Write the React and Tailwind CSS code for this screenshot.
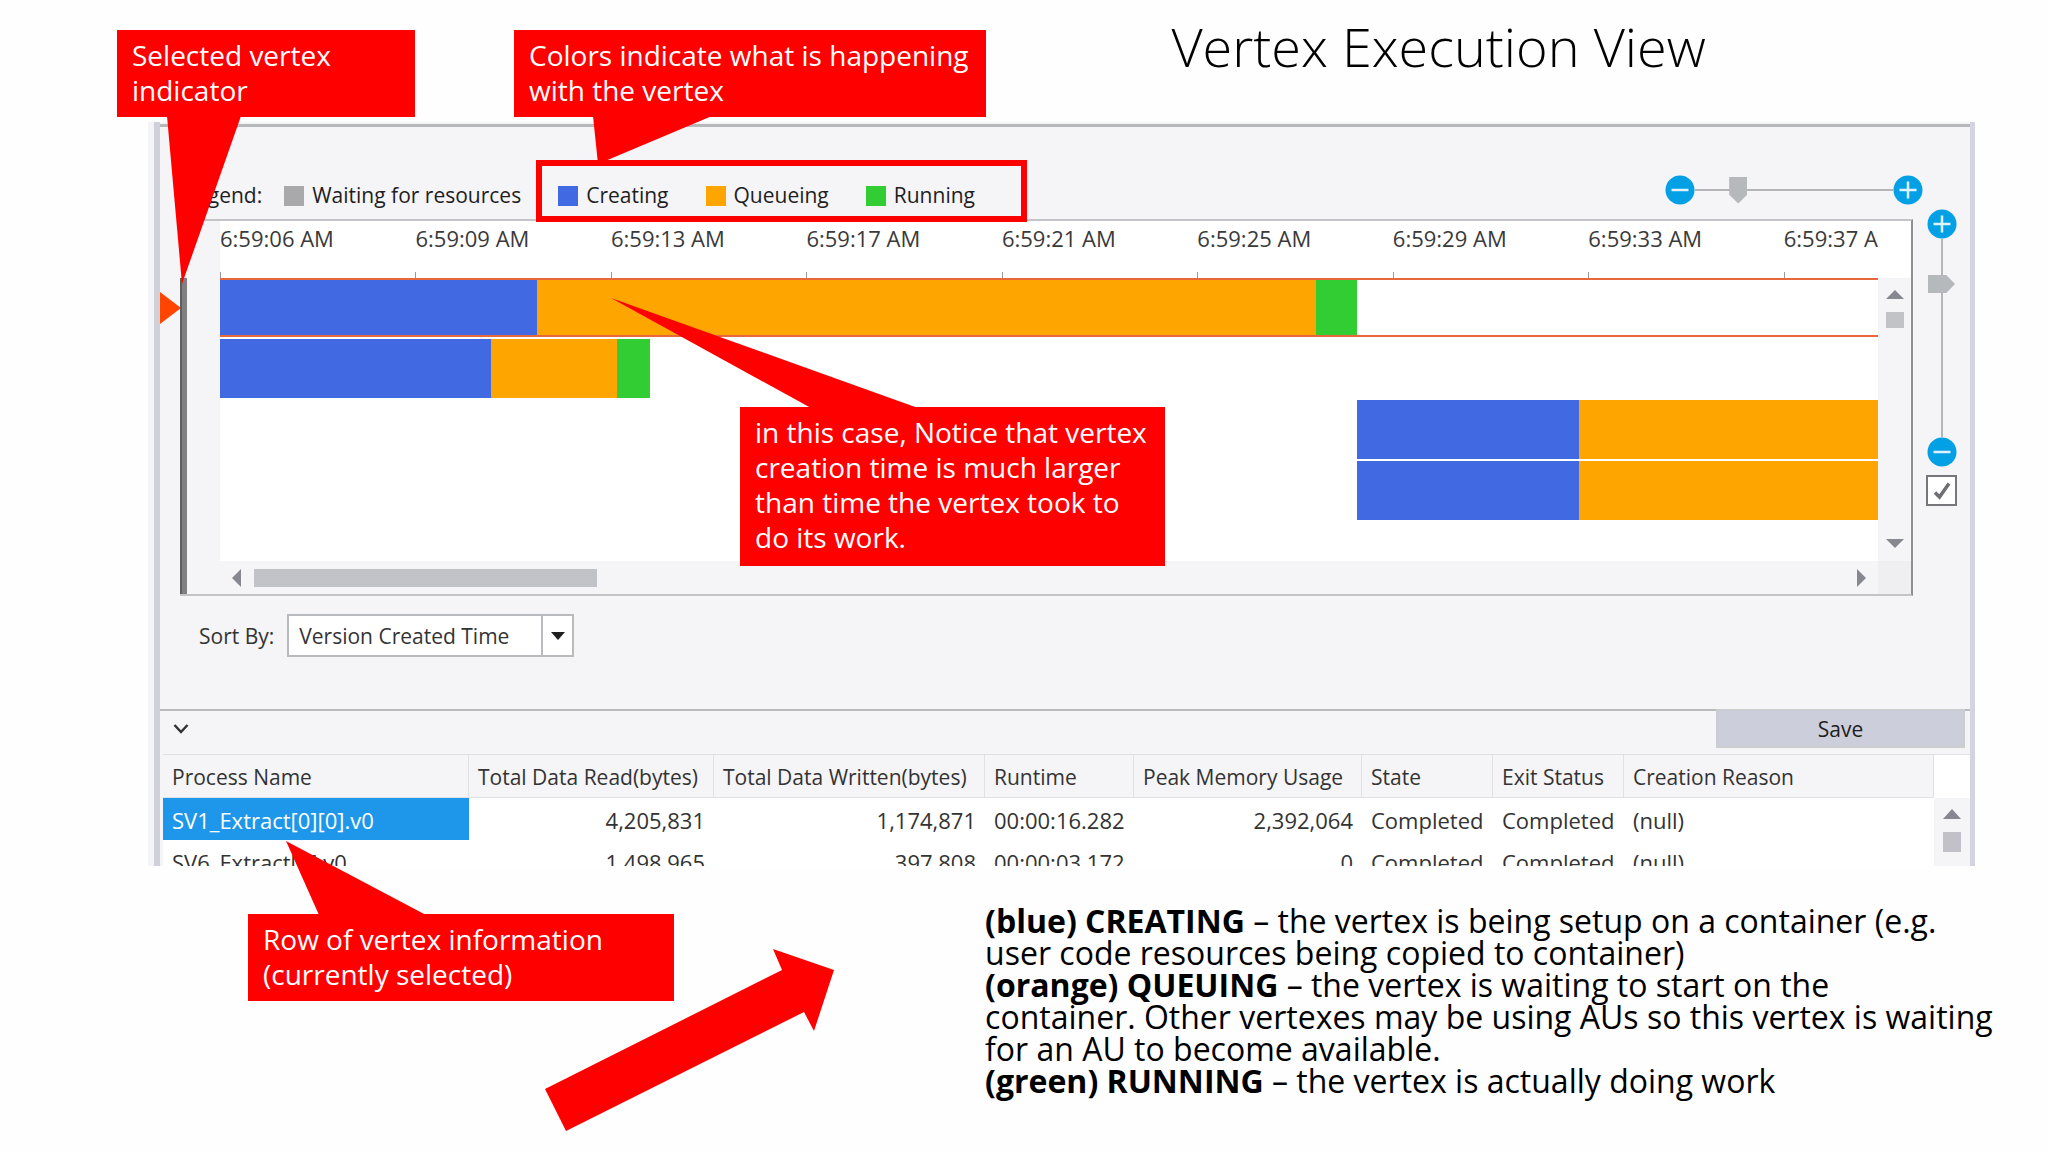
import React, { useState } from 'react';

const LEGEND = [
  { label: 'Waiting for resources', color: 'bg-[#a9a9ab]' },
  { label: 'Creating', color: 'bg-[#4169e1]' },
  { label: 'Queueing', color: 'bg-[#ffa500]' },
  { label: 'Running', color: 'bg-[#32cd32]' },
];

const TIMES = [
  '6:59:06 AM', '6:59:09 AM', '6:59:13 AM', '6:59:17 AM', '6:59:21 AM',
  '6:59:25 AM', '6:59:29 AM', '6:59:33 AM', '6:59:37 AM',
];

// start and segment lengths are percentages of the visible time range
const VERTICES = [
  { start: 0, creating: 19.12, queueing: 46.98, running: 2.47, selected: true },
  { start: 0, creating: 16.34, queueing: 7.6, running: 1.99 },
  { start: 68.58, creating: 13.39, queueing: 18.03, running: 0 },
  { start: 68.58, creating: 13.39, queueing: 18.03, running: 0 },
];

const PROCESSES = [
  { name: 'SV1_Extract[0][0].v0', read: '4,205,831', written: '1,174,871', runtime: '00:00:16.282', memory: '2,392,064', state: 'Completed', exit: 'Completed', reason: '(null)' },
  { name: 'SV6_Extract[0].v0', read: '1,498,965', written: '397,808', runtime: '00:00:03.172', memory: '0', state: 'Completed', exit: 'Completed', reason: '(null)' },
];

const HEADERS = [
  'Process Name', 'Total Data Read(bytes)', 'Total Data Written(bytes)', 'Runtime',
  'Peak Memory Usage', 'State', 'Exit Status', 'Creation Reason',
];

function Callout({ className, tail, children }) {
  return (
    <div className={`absolute z-20 bg-[#ff0000] px-[15px] pt-2 text-white text-[28px] leading-[35px] whitespace-nowrap ${className}`}>
      <svg className="absolute left-0 top-0 overflow-visible pointer-events-none" width="1" height="1">
        <polygon points={tail} fill="#ff0000" />
      </svg>
      <p className="relative">{children}</p>
    </div>
  );
}

function ZoomButton({ plus, label }) {
  return (
    <button type="button" aria-label={label} className="block shrink-0">
      <svg width="30" height="30" viewBox="0 0 30 30">
        <circle cx="15" cy="15" r="14.5" fill="#03a0e6" />
        <path d={plus ? 'M6.5 15h17M15 6.5v17' : 'M6.5 15h17'} stroke="#dff3fd" strokeWidth="2.5" />
      </svg>
    </button>
  );
}

function Arrow({ points }) {
  return (
    <svg width="18" height="18" viewBox="0 0 18 18" className="shrink-0">
      <polygon points={points} fill="#87878f" />
    </svg>
  );
}

function Legend() {
  return (
    <div className="flex items-center h-[42px] text-[21px] text-[#1e1e1e] whitespace-nowrap">
      <span className="mr-[22px]">Legend:</span>
      <ul className="flex gap-[37px]">
        {LEGEND.map((item) => (
          <li key={item.label} className="flex items-center gap-2">
            <span className={`size-5 ${item.color}`} />
            {item.label}
          </li>
        ))}
      </ul>
    </div>
  );
}

function Timeline() {
  return (
    <div className="flex-1 min-w-0 flex border-y-2 border-[#c4c4c8] border-r-2 border-r-[#8e8e93]">
      <div className="w-10 shrink-0 pt-[57px]">
        <div className="w-[7px] h-full bg-[#808080] border-l-2 border-[#5f5f61]" />
      </div>
      <div className="flex-1 min-w-0 flex flex-col">
        <div className="bg-white h-[57px] pr-[33px]">
          <div className="flex h-full overflow-hidden">
            {TIMES.map((time) => (
              <div key={time} className="w-[11.79%] shrink-0 flex flex-col justify-between whitespace-nowrap text-[22px] leading-[34px] text-[#3a3a3a]">
                {time}
                <span className="block w-px h-1.5 bg-[#9a9a9e]" />
              </div>
            ))}
          </div>
        </div>
        <div className="flex">
          <div className="flex-1 min-w-0 bg-white h-[283px] overflow-hidden flex flex-col gap-0.5">
            {VERTICES.map((v, i) => (
              <div key={i} className={`flex h-[59px] shrink-0 ${v.selected ? 'border-y-2 border-[#e8683c]' : ''}`}>
                <div style={{ width: `${v.start}%` }} />
                <div className="bg-[#4169e1]" style={{ width: `${v.creating}%` }} />
                <div className="bg-[#ffa500]" style={{ width: `${v.queueing}%` }} />
                <div className="bg-[#32cd32]" style={{ width: `${v.running}%` }} />
              </div>
            ))}
          </div>
          <div className="w-[33px] flex flex-col items-center justify-between pt-2 pb-2 bg-[#f5f4f7]">
            <div className="flex flex-col items-center gap-2">
              <Arrow points="0,13 18,13 9,4" />
              <span className="w-[18px] h-4 bg-[#c2c3c7]" />
            </div>
            <Arrow points="0,4 18,4 9,13" />
          </div>
        </div>
        <div className="flex h-[33px]">
          <div className="flex-1 flex items-center bg-[#f5f4f7] pl-2 pr-2">
            <Arrow points="13,0 13,18 4,9" />
            <div className="flex-1 px-2">
              <div className="w-[21.6%] h-[18px] bg-[#c2c3c9]" />
            </div>
            <Arrow points="5,0 5,18 14,9" />
          </div>
          <div className="w-[33px] bg-[#efeef1]" />
        </div>
      </div>
    </div>
  );
}

function ProcessTable() {
  return (
    <div className="flex h-[112px] overflow-hidden border-t border-[#dfe1e4] ml-[3px] bg-white">
      <table className="flex-1 table-fixed border-separate border-spacing-0 w-full self-start text-[#333333]">
        <colgroup>
          <col className="w-[306px]" />
          <col className="w-[245px]" />
          <col className="w-[271px]" />
          <col className="w-[149px]" />
          <col className="w-[228px]" />
          <col className="w-[131px]" />
          <col className="w-[131px]" />
          <col />
        </colgroup>
        <thead>
          <tr className="h-[43px] bg-[#f5f4f7] text-[21px]">
            {HEADERS.map((h) => (
              <th key={h} scope="col" className="border-r border-b border-[#dfe1e4] font-normal text-left px-[9px] pt-1 whitespace-nowrap">{h}</th>
            ))}
          </tr>
        </thead>
        <tbody>
          {PROCESSES.map((p, i) => (
            <tr key={p.name} className="h-[42px] whitespace-nowrap text-[22px]">
              <td className={i === 0 ? 'px-[9px] pt-0.5 bg-[#1e97ea] text-white' : 'px-[9px] pt-0.5'}>{p.name}</td>
              <td className="px-[9px] pt-0.5 text-right">{p.read}</td>
              <td className="px-[9px] pt-0.5 text-right">{p.written}</td>
              <td className="px-[9px] pt-0.5">{p.runtime}</td>
              <td className="px-[9px] pt-0.5 text-right">{p.memory}</td>
              <td className="px-[9px] pt-0.5">{p.state}</td>
              <td className="px-[9px] pt-0.5">{p.exit}</td>
              <td className="px-[9px] pt-0.5">{p.reason}</td>
            </tr>
          ))}
        </tbody>
      </table>
      <div className="w-9 shrink-0 pt-[43px]">
        <div className="h-full bg-[#f5f4f7] flex flex-col items-center gap-2 pt-2">
          <Arrow points="0,13 18,13 9,3" />
          <span className="w-[18px] h-5 bg-[#c2c1c9]" />
        </div>
      </div>
    </div>
  );
}

function App() {
  const [zoomX, setZoomX] = useState(19);
  const [zoomY, setZoomY] = useState(80);
  const [fit, setFit] = useState(true);

  return (
    <div className="relative min-h-screen w-full overflow-hidden bg-[#fefefe] font-['Open_Sans','Noto_Sans',sans-serif]">
      <header className="h-[122px] pl-[57.2%]">
        <h1 className="text-[54px] leading-[92px] font-light text-black whitespace-nowrap">Vertex Execution View</h1>
      </header>

      {/* Tool window */}
      <section className="ml-[148px] mr-[73px] pl-1.5 bg-[#f4f3f8]">
        <div className="border-l-6 border-[#d0d1d8] border-r-5 border-r-[#d3d3e2] bg-[#f5f4f7] pt-0.5">
          <div className="border-t-3 border-[#b7b8ba] h-[95px] pt-12 pl-[25px] pr-[47px] flex items-start justify-between">
            <Legend />
            <div className="flex items-center">
              <ZoomButton label="Zoom out time" />
              <input
                type="range"
                aria-label="Time zoom"
                value={zoomX}
                onChange={(e) => setZoomX(Number(e.target.value))}
                className="appearance-none w-[198px] h-7 bg-[linear-gradient(#b4b5b9,#b4b5b9)] bg-[length:100%_2px] bg-center bg-no-repeat [&::-webkit-slider-thumb]:appearance-none [&::-webkit-slider-thumb]:w-[18px] [&::-webkit-slider-thumb]:h-[27px] [&::-webkit-slider-thumb]:bg-[#b6b9bc] [&::-webkit-slider-thumb]:[clip-path:polygon(0_0,100%_0,100%_68%,50%_100%,0_68%)]"
              />
              <ZoomButton plus label="Zoom in time" />
            </div>
          </div>

          <div className="flex">
            <div className="w-5 shrink-0 pt-[73px]">
              <svg width="21" height="32" className="overflow-visible">
                <polygon points="0,0 21,16 0,32" fill="#ff4500" />
              </svg>
            </div>
            <Timeline />
            <div className="w-[57px] shrink-0 flex flex-col items-center -mt-2.5">
              <ZoomButton plus label="Zoom in rows" />
              <input
                type="range"
                aria-label="Row zoom"
                value={zoomY}
                onChange={(e) => setZoomY(Number(e.target.value))}
                className="appearance-none [writing-mode:vertical-lr] [direction:rtl] w-7 h-[198px] bg-[linear-gradient(#b4b5b9,#b4b5b9)] bg-[length:2px_100%] bg-center bg-no-repeat [&::-webkit-slider-thumb]:appearance-none [&::-webkit-slider-thumb]:w-[27px] [&::-webkit-slider-thumb]:h-[18px] [&::-webkit-slider-thumb]:bg-[#b6b9bc] [&::-webkit-slider-thumb]:[clip-path:polygon(0_0,68%_0,100%_50%,68%_100%,0_100%)]"
              />
              <ZoomButton label="Zoom out rows" />
              <label className="relative block mt-2 size-[31px]">
                <input
                  type="checkbox"
                  aria-label="Fit rows"
                  checked={fit}
                  onChange={(e) => setFit(e.target.checked)}
                  className="appearance-none block size-[31px] bg-white border-2 border-[#77777b]"
                />
                {fit && (
                  <svg className="absolute inset-0 pointer-events-none" width="31" height="31" viewBox="0 0 31 31">
                    <path d="M9 17.5L13.500 22L23 8.500" fill="none" stroke="#6f6f73" strokeWidth="3.5" />
                  </svg>
                )}
              </label>
            </div>
          </div>

          <div className="h-[113px] pt-[18px] pl-[39px] flex items-start gap-[13px] text-[21px] text-[#333333]">
            <label htmlFor="sort" className="leading-[45px]">Sort By:</label>
            <div className="relative">
              <select id="sort" className="appearance-none w-[287px] h-[43px] pl-2.5 pt-0.5 bg-white border-2 border-[#b9babe]">
                <option>Version Created Time</option>
              </select>
              <span className="absolute right-0 inset-y-0 w-[33px] border-2 border-[#b9babe] flex items-center justify-center pointer-events-none">
                <svg width="14" height="8">
                  <polygon points="0,0 14,0 7,8" fill="#1e1e1e" />
                </svg>
              </span>
            </div>
          </div>

          <div className="border-t-2 border-[#b9babc] h-[45px] flex items-start justify-between pl-[13px] pr-[5px]">
            <button type="button" aria-label="Collapse" className="pt-3">
              <svg width="16" height="12" viewBox="0 0 16 12">
                <path d="M1.5 2l6.5 7 6.5-7" fill="none" stroke="#333333" strokeWidth="2.5" />
              </svg>
            </button>
            <button type="button" className="-mt-0.5 w-[249px] h-[39px] bg-[#cccedb] border-2 border-[#cbcdce] text-[21px] text-[#1e1e1e] leading-[34px]">Save</button>
          </div>

          <ProcessTable />
        </div>
      </section>

      <section className="ml-[48.1%] mt-[39px] text-[32px] leading-8 text-black whitespace-nowrap">
        <p><b>(blue) CREATING</b> – the vertex is being setup on a container (e.g.<br />user code resources being copied to container)</p>
        <p><b>(orange) QUEUING</b> – the vertex is waiting to start on the<br />container. Other vertexes may be using AUs so this vertex is waiting<br />for an AU to become available.</p>
        <p><b>(green) RUNNING</b> – the vertex is actually doing work</p>
      </section>

      {/* Annotations over the tool window */}
      <div className="absolute z-10 left-[536px] top-[160px] w-[491px] h-[62px] border-6 border-[#ff0000]" />
      <Callout className="left-[117px] top-[30px] w-[298px] h-[87px]" tail="50,86 124,86 65,254">
        Selected vertex<br />indicator
      </Callout>
      <Callout className="left-[514px] top-[30px] w-[472px] h-[87px]" tail="79,86 198,86 84,134">
        Colors indicate what is happening<br />with the vertex
      </Callout>
      <Callout className="left-[740px] top-[407px] w-[425px] h-[159px]" tail="71,1 178,1 -129,-109">
        in this case, Notice that vertex<br />creation time is much larger<br />than time the vertex took to<br />do its work.
      </Callout>
      <Callout className="left-[248px] top-[914px] w-[426px] h-[87px]" tail="71,1 178,1 38,-73">
        Row of vertex information<br />(currently selected)
      </Callout>
      <svg className="absolute left-[545px] top-[949px]" width="290" height="183">
        <polygon points="0,140 237,21 228,0 289,21 269,82 259,63 21,182" fill="#ff0000" />
      </svg>
    </div>
  );
}

export default App;
